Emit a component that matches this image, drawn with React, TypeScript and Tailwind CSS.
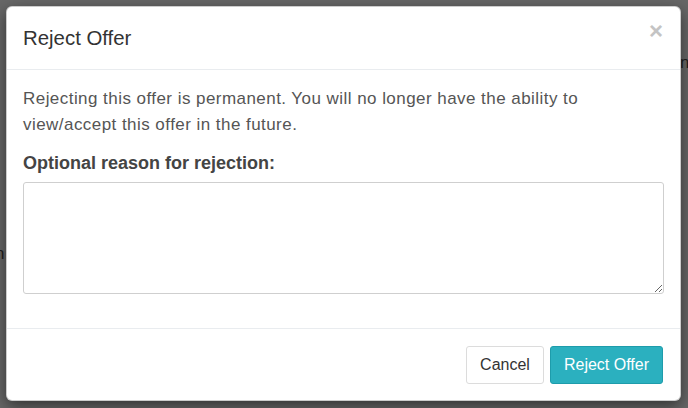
import { useState } from "react";

export default function App() {
  const [reason, setReason] = useState("");

  return (
    <div
      className="relative h-[408px] w-[688px] overflow-hidden bg-[#676767] px-[6px] pt-[6px]"
      style={{ fontFamily: '"Liberation Sans", Arial, sans-serif' }}
    >
      {/* bits of the page behind the backdrop */}
      <span className="absolute left-[-6px] top-[50px] text-[17px] leading-6 text-[#1e1e1e]">t</span>
      <span className="absolute left-[680px] top-[51px] text-[17px] leading-6 text-[#1e1e1e]">n</span>
      <span className="absolute left-[-5px] top-[242px] text-[17px] leading-6 text-[#1e1e1e]">n</span>

      <div className="relative w-[675px] rounded-[6px] border border-black/20 bg-white shadow-[0_5px_15px_rgba(0,0,0,0.5)]">
        <div className="flex items-start justify-between border-b border-[#e9ecef] p-4">
          <h4 className="text-[20.4px] leading-[30px] text-[#333]">Reject Offer</h4>
          <button className="-mt-[7px] mr-[1px] text-[24px] font-bold leading-[30px] text-[#c4c4c4]">×</button>
        </div>

        <div className="px-4 pb-[18px] pt-4 text-[17px] leading-[26px] text-[#555]">
          <p className="mb-[13px] max-w-[600px] tracking-[0.45px]">
            Rejecting this offer is permanent. You will no longer have the ability to view/accept this offer in the
            future.
          </p>
          <div className="mb-4">
            <label className="mb-[7px] block text-[18px] font-bold leading-6 text-[#444]">
              Optional reason for rejection:
            </label>
            <textarea
              value={reason}
              onChange={(e) => setReason(e.target.value)}
              className="block h-[112px] w-full rounded-[3px] border border-[#cfcfcf] px-3 py-1.5 outline-none"
            />
          </div>
        </div>

        <div className="flex items-center justify-end gap-[6px] border-t border-[#e9ecef] pb-4 pl-4 pr-[17px] pt-[17px]">
          <button className="h-[38px] w-[78px] rounded-[3px] border border-[#dcdcdc] bg-white text-[16px] text-[#333]">
            Cancel
          </button>
          <button className="h-[38px] w-[113px] rounded-[3px] border border-[#1e9cab] bg-[#2bb0bf] text-[16px] text-white">
            Reject Offer
          </button>
        </div>
      </div>
    </div>
  );
}
